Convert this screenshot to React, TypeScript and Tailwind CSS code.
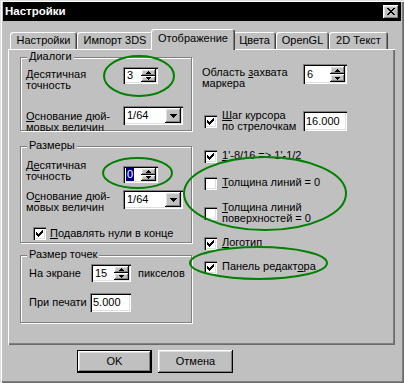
import React from "react";

const SUNKEN =
  "shadow-[inset_1px_1px_#808080,inset_2px_2px_#000,inset_-1px_-1px_#fff,inset_-2px_-2px_#dfdfdf]";
const RAISED =
  "shadow-[inset_-1px_-1px_#000,inset_1px_1px_#fff,inset_-2px_-2px_#808080,inset_2px_2px_#dfdfdf]";
const ETCHED =
  "border border-[#808080] shadow-[inset_1px_1px_#fff,1px_1px_#fff]";
const TAB =
  "bg-[#c0c0c0] rounded-t-[3px] shadow-[inset_1px_1px_#fff,inset_-1px_0_#404040,inset_-2px_0_#808080] flex items-center justify-center";

function UpArrow() {
  return (
    <svg width="5" height="3" viewBox="0 0 5 3" shapeRendering="crispEdges">
      <rect x="2" y="0" width="1" height="1" fill="#000" />
      <rect x="1" y="1" width="3" height="1" fill="#000" />
      <rect x="0" y="2" width="5" height="1" fill="#000" />
    </svg>
  );
}

function DownArrow({ big = false }: { big?: boolean }) {
  if (big) {
    return (
      <svg width="7" height="4" viewBox="0 0 7 4" shapeRendering="crispEdges">
        <rect x="0" y="0" width="7" height="1" fill="#000" />
        <rect x="1" y="1" width="5" height="1" fill="#000" />
        <rect x="2" y="2" width="3" height="1" fill="#000" />
        <rect x="3" y="3" width="1" height="1" fill="#000" />
      </svg>
    );
  }
  return (
    <svg width="5" height="3" viewBox="0 0 5 3" shapeRendering="crispEdges">
      <rect x="0" y="0" width="5" height="1" fill="#000" />
      <rect x="1" y="1" width="3" height="1" fill="#000" />
      <rect x="2" y="2" width="1" height="1" fill="#000" />
    </svg>
  );
}

function Spin({
  value,
  cls,
  selected = false,
}: {
  value: string;
  cls: string;
  selected?: boolean;
}) {
  return (
    <div className={`flex shrink-0 bg-white p-[2px] ${SUNKEN} ${cls}`}>
      <div className="flex-1 flex items-center pl-[1px]">
        {selected ? (
          <span className="bg-[#000080] text-white px-[1px] leading-[13px]">
            {value}
          </span>
        ) : (
          <span className="pl-[1px]">{value}</span>
        )}
      </div>
      <div className="flex flex-col w-[15px]">
        <div className={`flex-1 flex items-center justify-center bg-[#c0c0c0] ${RAISED}`}>
          <UpArrow />
        </div>
        <div className={`flex-1 flex items-center justify-center bg-[#c0c0c0] ${RAISED}`}>
          <DownArrow />
        </div>
      </div>
    </div>
  );
}

function Combo({ value }: { value: string }) {
  return (
    <div className={`flex shrink-0 w-[60px] h-[19px] bg-white p-[2px] ${SUNKEN}`}>
      <div className="flex-1 flex items-center pl-[2px]">{value}</div>
      <div className={`w-[16px] flex items-center justify-center bg-[#c0c0c0] ${RAISED}`}>
        <DownArrow big />
      </div>
    </div>
  );
}

function Field({ value, cls }: { value: string; cls: string }) {
  return (
    <div className={`flex shrink-0 items-center bg-white pl-[3px] ${SUNKEN} ${cls}`}>
      {value}
    </div>
  );
}

function Check({ checked }: { checked: boolean }) {
  return (
    <div
      className={`w-[13px] h-[13px] shrink-0 bg-white flex items-center justify-center ${SUNKEN}`}
    >
      {checked && (
        <svg width="7" height="7" viewBox="0 0 7 7" shapeRendering="crispEdges">
          <rect x="6" y="0" width="1" height="1" fill="#000" />
          <rect x="5" y="1" width="2" height="1" fill="#000" />
          <rect x="0" y="2" width="1" height="1" fill="#000" />
          <rect x="4" y="2" width="3" height="1" fill="#000" />
          <rect x="0" y="3" width="2" height="1" fill="#000" />
          <rect x="3" y="3" width="3" height="1" fill="#000" />
          <rect x="0" y="4" width="5" height="1" fill="#000" />
          <rect x="1" y="5" width="3" height="1" fill="#000" />
          <rect x="2" y="6" width="1" height="1" fill="#000" />
        </svg>
      )}
    </div>
  );
}

function GroupLabel({ text }: { text: string }) {
  return (
    <div className="absolute -top-[7px] left-[6px] px-[2px] bg-[#c0c0c0] leading-[11px]">
      {text}
    </div>
  );
}

export default function App() {
  return (
    <div
      className={`relative w-[404px] h-[383px] overflow-hidden bg-[#c0c0c0] pt-[2px] px-[3px] text-black text-[11px] leading-[11px] font-['Liberation_Sans',Arial,sans-serif] shadow-[inset_1px_1px_#dfdfdf,inset_2px_2px_#fff,inset_-1px_-1px_#6a6a6a,inset_-2px_-2px_#808080]`}
    >
      {/* Title bar */}
      <div className="h-[19px] bg-black flex items-center justify-between pl-[2px] pr-[2px]">
        <span className="text-white font-bold text-[11.5px] leading-[13px]">Настройки</span>
        <div className={`w-[16px] h-[14px] bg-[#c0c0c0] flex items-center justify-center ${RAISED}`}>
          <svg width="8" height="7" viewBox="0 0 8 7" shapeRendering="crispEdges">
            <path d="M0 0h2v1H0zM6 0h2v1H6zM1 1h2v1H1zM5 1h2v1H5zM2 2h4v1H2zM3 3h2v1H3zM2 4h4v1H2zM1 5h2v1H1zM5 5h2v1H5zM0 6h2v1H0zM6 6h2v1H6z" fill="#000" />
          </svg>
        </div>
      </div>

      {/* Tabs */}
      <div className="flex items-end h-[20px] mt-[8px] pl-[7px]">
        <div className={`${TAB} w-[67px] h-[17px]`}>Настройки</div>
        <div className={`${TAB} w-[76px] h-[17px]`}>Импорт 3DS</div>
        <div className={`${TAB} relative z-10 w-[84px] h-[21px] -mx-[2px] -mb-[1px] pb-[3px]`}>
          Отображение
        </div>
        <div className={`${TAB} w-[43px] h-[17px]`}>Цвета</div>
        <div className={`${TAB} w-[53px] h-[17px]`}>OpenGL</div>
        <div className={`${TAB} w-[59px] h-[17px]`}>2D Текст</div>
      </div>

      {/* Tab panel */}
      <div className="relative z-0 ml-[5px] w-[387px] h-[296px] flex items-start shadow-[inset_1px_1px_#fff,inset_-1px_-1px_#6a6a6a,inset_-2px_-2px_#808080]">
        {/* Left column */}
        <div className="ml-[12px] mt-[8px] w-[173px] flex flex-col">
          {/* Диалоги */}
          <div className={`relative w-[172px] h-[74px] ${ETCHED}`}>
            <GroupLabel text="Диалоги" />
            <div className="flex items-start mt-[9px] pl-[5px]">
              <div className="w-[97px] mt-[2px]">
                <u className="underline">Д</u>есятичная
                <br />
                точность
              </div>
              <Spin value="3" cls="w-[35px] h-[17px]" />
            </div>
            <div className="flex items-start mt-[15px] pl-[5px]">
              <div className="w-[97px] mt-[5px]">
                <u className="underline">О</u>снование дюй-
                <br />
                мовых величин
              </div>
              <Combo value="1/64" />
            </div>
          </div>

          {/* Размеры */}
          <div className={`relative w-[172px] h-[97px] mt-[15px] ${ETCHED}`}>
            <GroupLabel text="Размеры" />
            <div className="flex items-start mt-[13px] pl-[5px]">
              <div className="w-[97px]">
                Д<u className="underline">е</u>сятичная
                <br />
                точность
              </div>
              <Spin value="0" cls="w-[35px] h-[17px] mt-[6px]" selected />
            </div>
            <div className="flex items-start mt-[7px] pl-[5px]">
              <div className="w-[97px] mt-[1px]">
                О<u className="underline">с</u>нование дюй-
                <br />
                мовых величин
              </div>
              <Combo value="1/64" />
            </div>
            <div className="flex items-center gap-[4px] mt-[14px] pl-[12px]">
              <Check checked />
              <span>
                <u className="underline">П</u>одавлять нули в конце
              </span>
            </div>
          </div>

          {/* Размер точек */}
          <div className={`relative w-[172px] h-[68px] mt-[12px] ${ETCHED}`}>
            <GroupLabel text="Размер точек" />
            <div className="flex items-center mt-[8px] pl-[8px]">
              <div className="w-[62px]">На экране</div>
              <Spin value="15" cls="w-[40px] h-[18px]" />
              <div className="ml-[7px]">пикселов</div>
            </div>
            <div className="flex items-center mt-[11px] pl-[8px]">
              <div className="w-[61px]">При печати</div>
              <Field value="5.000" cls="w-[41px] h-[19px]" />
            </div>
          </div>
        </div>

        {/* Right column */}
        <div className="ml-[9px] mt-[15px] flex flex-col">
          <div className="flex items-start">
            <div className="w-[101px] mt-[3px]">
              Область <u className="underline">з</u>ахвата
              <br />
              маркера
            </div>
            <Spin value="6" cls="w-[44px] h-[20px]" />
          </div>

          <div className="flex items-center mt-[21px] pl-[2px]">
            <Check checked />
            <div className="w-[81px] ml-[5px]">
              <u className="underline">Ш</u>аг курсора
              <br />
              по стрелочкам
            </div>
            <Field value="16.000" cls="w-[44px] h-[20px]" />
          </div>

          <div className="flex items-start gap-[5px] mt-[18px] pl-[2px]">
            <Check checked />
            <span>
              <u className="underline">1</u>'-8/16 =&gt; 1'-1/2
            </span>
          </div>

          <div className="flex items-start gap-[5px] mt-[14px] pl-[2px]">
            <Check checked={false} />
            <span>
              <u className="underline">Т</u>олщина линий = 0
            </span>
          </div>

          <div className="flex items-center gap-[5px] mt-[12px] pl-[2px]">
            <Check checked={false} />
            <span>
              <u className="underline">Т</u>олщина линий
              <br />
              поверхностей = 0
            </span>
          </div>

          <div className="flex items-start gap-[5px] mt-[13px] pl-[2px]">
            <Check checked />
            <span>
              <u className="underline">Л</u>оготип
            </span>
          </div>

          <div className="flex items-start gap-[5px] mt-[11px] pl-[2px]">
            <Check checked />
            <span>
              Панель редакт<u className="underline">о</u>ра
            </span>
          </div>
        </div>
      </div>

      {/* Buttons */}
      <div className="flex gap-[6px] mt-[5px] ml-[74px]">
        <div className="w-[75px] h-[23px] border border-black">
          <div className={`w-full h-full bg-[#c0c0c0] flex items-center justify-center ${RAISED}`}>
            OK
          </div>
        </div>
        <div className={`w-[75px] h-[23px] bg-[#c0c0c0] flex items-center justify-center ${RAISED}`}>
          Отмена
        </div>
      </div>

      {/* Green annotation ellipses */}
      <svg
        className="absolute left-0 top-0 pointer-events-none"
        width="404"
        height="383"
        viewBox="0 0 404 383"
      >
        <g fill="none" stroke="#008000" strokeWidth="2">
          <ellipse cx="139" cy="76" rx="35" ry="20" />
          <ellipse cx="137.5" cy="173" rx="34.5" ry="15" />
          <ellipse cx="265" cy="193.5" rx="81" ry="36.5" />
          <ellipse cx="258.5" cy="263" rx="68.5" ry="16" />
        </g>
      </svg>
    </div>
  );
}
